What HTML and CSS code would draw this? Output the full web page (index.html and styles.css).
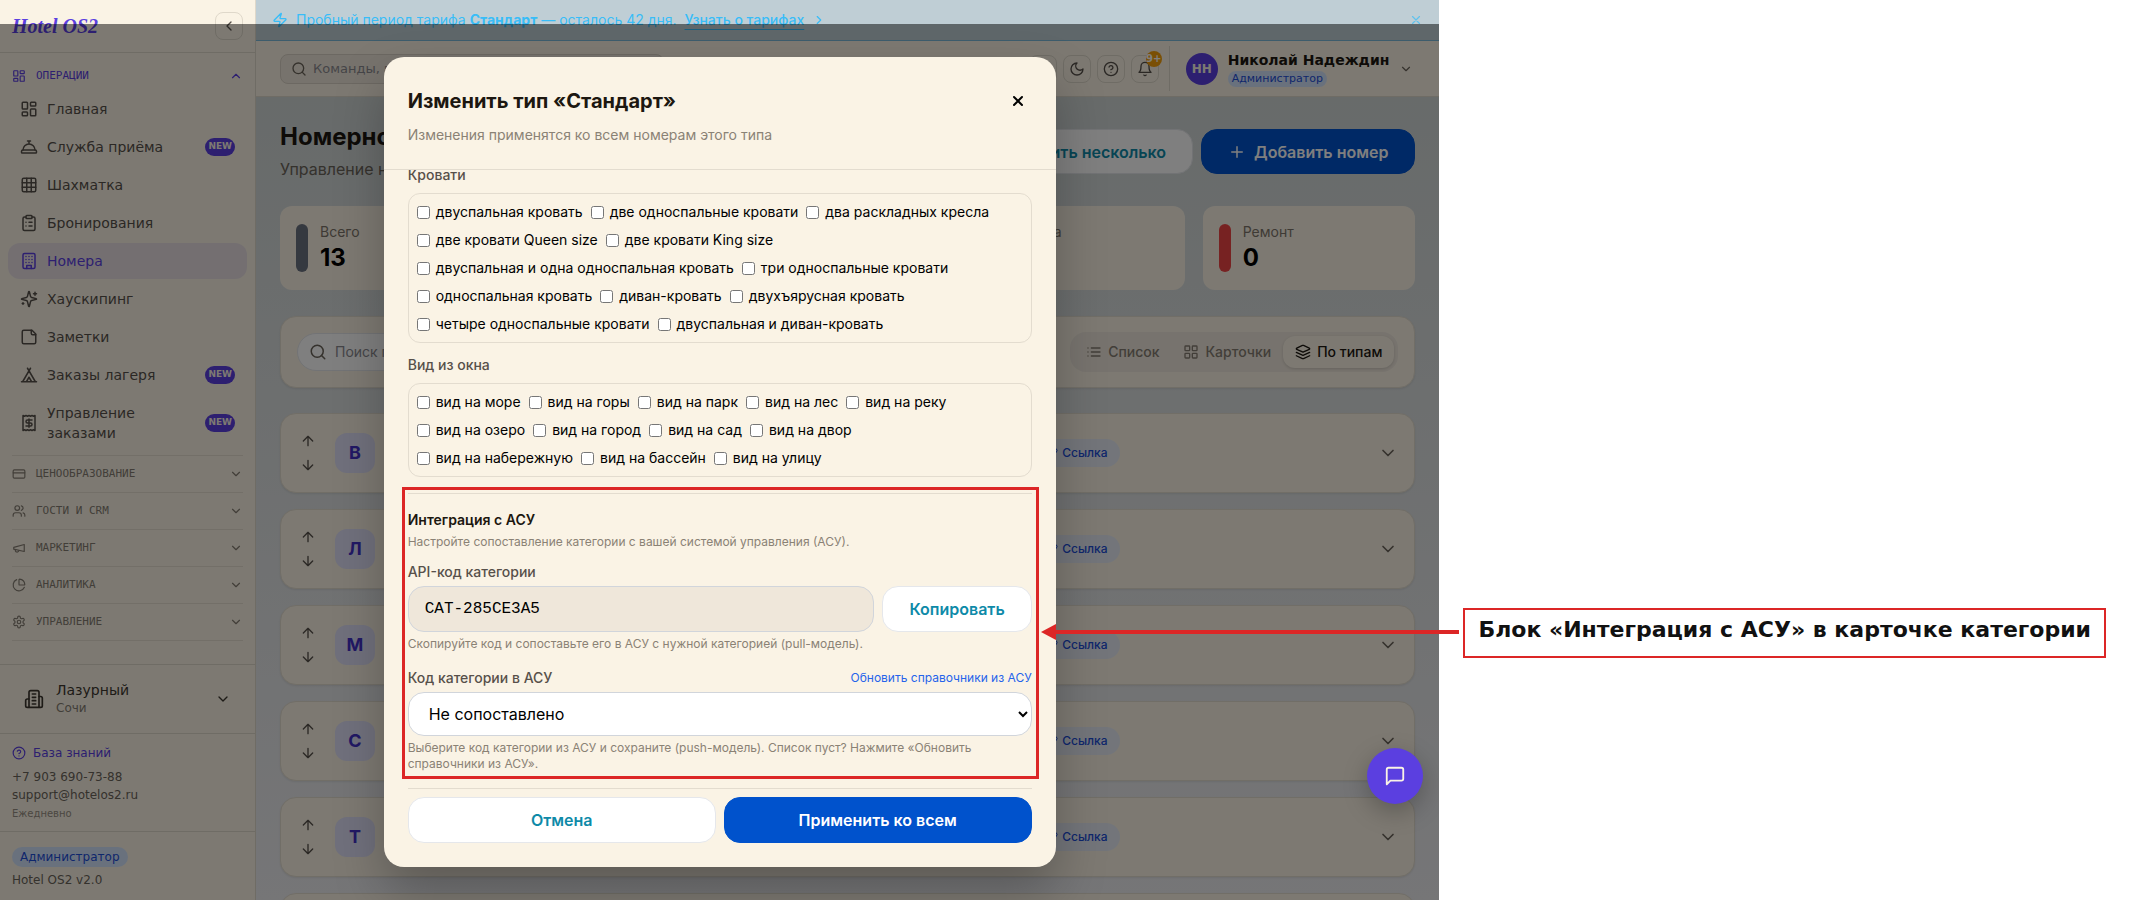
FILE: index.html
```html
<!DOCTYPE html>
<html lang="ru">
<head>
  <meta charset="UTF-8">
  <meta name="viewport" content="width=device-width, initial-scale=1.0">
  <title>Hotel OS2 — Номера</title>
  <link rel="stylesheet" href="styles.css">
</head>
<body>

<!-- набор иконок -->
<svg class="sprite" aria-hidden="true">
  <symbol id="i-dashboard" viewBox="0 0 24 24"><rect x="3" y="3" width="7" height="9" rx="1"/><rect x="14" y="3" width="7" height="5" rx="1"/><rect x="14" y="12" width="7" height="9" rx="1"/><rect x="3" y="16" width="7" height="5" rx="1"/></symbol>
  <symbol id="i-bellhop" viewBox="0 0 24 24"><path d="M3 20a1 1 0 0 1-1-1v-1a2 2 0 0 1 2-2h16a2 2 0 0 1 2 2v1a1 1 0 0 1-1 1Z"/><path d="M20 16a8 8 0 1 0-16 0M12 4v4M10 4h4"/></symbol>
  <symbol id="i-grid" viewBox="0 0 24 24"><rect x="3" y="3" width="18" height="18" rx="2"/><path d="M3 9h18M3 15h18M9 3v18M15 3v18"/></symbol>
  <symbol id="i-clipboard" viewBox="0 0 24 24"><rect x="8" y="2" width="8" height="4" rx="1"/><path d="M16 4h2a2 2 0 0 1 2 2v14a2 2 0 0 1-2 2H6a2 2 0 0 1-2-2V6a2 2 0 0 1 2-2h2M12 11h4M12 16h4M8 11h.01M8 16h.01"/></symbol>
  <symbol id="i-building" viewBox="0 0 24 24"><rect x="4" y="2" width="16" height="20" rx="2"/><path d="M9 22v-4h6v4M8 6h.01M16 6h.01M12 6h.01M12 10h.01M12 14h.01M16 10h.01M16 14h.01M8 10h.01M8 14h.01"/></symbol>
  <symbol id="i-sparkles" viewBox="0 0 24 24"><path d="M9.937 15.5A2 2 0 0 0 8.5 14.063l-6.135-1.582a.5.5 0 0 1 0-.962L8.5 9.936A2 2 0 0 0 9.937 8.5l1.582-6.135a.5.5 0 0 1 .963 0L14.063 8.5A2 2 0 0 0 15.5 9.937l6.135 1.581a.5.5 0 0 1 0 .964L15.5 14.063a2 2 0 0 0-1.437 1.437l-1.582 6.135a.5.5 0 0 1-.963 0z"/><path d="M20 3v4M22 5h-4M4 17v2M5 18H3"/></symbol>
  <symbol id="i-note" viewBox="0 0 24 24"><path d="M16 3H5a2 2 0 0 0-2 2v14a2 2 0 0 0 2 2h14a2 2 0 0 0 2-2V8Z"/><path d="M15 3v4a2 2 0 0 0 2 2h4"/></symbol>
  <symbol id="i-tent" viewBox="0 0 24 24"><path d="M3.5 21 14 3M20.5 21 10 3M15.5 21 12 15l-3.5 6M2 21h20"/></symbol>
  <symbol id="i-receipt" viewBox="0 0 24 24"><path d="M4 2v20l2-1 2 1 2-1 2 1 2-1 2 1 2-1 2 1V2l-2 1-2-1-2 1-2-1-2 1-2-1-2 1Z"/><path d="M16 8h-6a2 2 0 1 0 0 4h4a2 2 0 1 1 0 4H8M12 17.5v-11"/></symbol>
  <symbol id="i-card" viewBox="0 0 24 24"><rect x="2" y="5" width="20" height="14" rx="2"/><path d="M2 10h20"/></symbol>
  <symbol id="i-users" viewBox="0 0 24 24"><path d="M16 21v-2a4 4 0 0 0-4-4H6a4 4 0 0 0-4 4v2M22 21v-2a4 4 0 0 0-3-3.87M16 3.13a4 4 0 0 1 0 7.75"/><circle cx="9" cy="7" r="4"/></symbol>
  <symbol id="i-megaphone" viewBox="0 0 24 24"><path d="m3 11 18-5v12L3 14v-3z"/><path d="M11.6 16.8a3 3 0 1 1-5.8-1.6"/></symbol>
  <symbol id="i-pie" viewBox="0 0 24 24"><path d="M21 12c.552 0 1.005-.449.95-.998a10 10 0 0 0-8.953-8.951c-.55-.055-.998.398-.998.95v8a1 1 0 0 0 1 1z"/><path d="M21.21 15.89A10 10 0 1 1 8 2.83"/></symbol>
  <symbol id="i-settings" viewBox="0 0 24 24"><path d="M12.22 2h-.44a2 2 0 0 0-2 2v.18a2 2 0 0 1-1 1.73l-.43.25a2 2 0 0 1-2 0l-.15-.08a2 2 0 0 0-2.73.73l-.22.38a2 2 0 0 0 .73 2.73l.15.1a2 2 0 0 1 1 1.72v.51a2 2 0 0 1-1 1.74l-.15.09a2 2 0 0 0-.73 2.73l.22.38a2 2 0 0 0 2.73.73l.15-.08a2 2 0 0 1 2 0l.43.25a2 2 0 0 1 1 1.73V20a2 2 0 0 0 2 2h.44a2 2 0 0 0 2-2v-.18a2 2 0 0 1 1-1.73l.43-.25a2 2 0 0 1 2 0l.15.08a2 2 0 0 0 2.73-.73l.22-.39a2 2 0 0 0-.73-2.73l-.15-.08a2 2 0 0 1-1-1.74v-.5a2 2 0 0 1 1-1.74l.15-.09a2 2 0 0 0 .73-2.73l-.22-.38a2 2 0 0 0-2.73-.73l-.15.08a2 2 0 0 1-2 0l-.43-.25a2 2 0 0 1-1-1.73V4a2 2 0 0 0-2-2z"/><circle cx="12" cy="12" r="3"/></symbol>
  <symbol id="i-hotel" viewBox="0 0 24 24"><path d="M6 22V4a2 2 0 0 1 2-2h8a2 2 0 0 1 2 2v18Z"/><path d="M6 12H4a2 2 0 0 0-2 2v6a2 2 0 0 0 2 2h2M18 9h2a2 2 0 0 1 2 2v9a2 2 0 0 1-2 2h-2M10 6h4M10 10h4M10 14h4M10 18h4"/></symbol>
  <symbol id="i-help" viewBox="0 0 24 24"><circle cx="12" cy="12" r="10"/><path d="M9.09 9a3 3 0 0 1 5.83 1c0 2-3 3-3 3M12 17h.01"/></symbol>
  <symbol id="i-moon" viewBox="0 0 24 24"><path d="M12 3a6 6 0 0 0 9 9 9 9 0 1 1-9-9Z"/></symbol>
  <symbol id="i-bell" viewBox="0 0 24 24"><path d="M6 8a6 6 0 0 1 12 0c0 7 3 9 3 9H3s3-2 3-9M10.3 21a1.94 1.94 0 0 0 3.4 0"/></symbol>
  <symbol id="i-zap" viewBox="0 0 24 24"><path d="M4 14a1 1 0 0 1-.78-1.63l9.9-10.2a.5.5 0 0 1 .86.46l-1.92 6.02A1 1 0 0 0 13 10h7a1 1 0 0 1 .78 1.63l-9.9 10.2a.5.5 0 0 1-.86-.46l1.92-6.02A1 1 0 0 0 11 14z"/></symbol>
  <symbol id="i-search" viewBox="0 0 24 24"><circle cx="11" cy="11" r="8"/><path d="m21 21-4.3-4.3"/></symbol>
  <symbol id="i-list" viewBox="0 0 24 24"><path d="M8 6h13M8 12h13M8 18h13M3 6h.01M3 12h.01M3 18h.01"/></symbol>
  <symbol id="i-cards" viewBox="0 0 24 24"><rect x="3" y="3" width="7" height="7" rx="1"/><rect x="14" y="3" width="7" height="7" rx="1"/><rect x="14" y="14" width="7" height="7" rx="1"/><rect x="3" y="14" width="7" height="7" rx="1"/></symbol>
  <symbol id="i-layers" viewBox="0 0 24 24"><path d="m12.83 2.18a2 2 0 0 0-1.66 0L2.6 6.08a1 1 0 0 0 0 1.83l8.58 3.91a2 2 0 0 0 1.66 0l8.58-3.9a1 1 0 0 0 0-1.83Z"/><path d="m22 17.65-9.17 4.16a2 2 0 0 1-1.66 0L2 17.65M22 12.65l-9.17 4.16a2 2 0 0 1-1.66 0L2 12.65"/></symbol>
  <symbol id="i-link" viewBox="0 0 24 24"><path d="M10 13a5 5 0 0 0 7.54.54l3-3a5 5 0 0 0-7.07-7.07l-1.72 1.71"/><path d="M14 11a5 5 0 0 0-7.54-.54l-3 3a5 5 0 0 0 7.07 7.07l1.71-1.71"/></symbol>
  <symbol id="i-chat" viewBox="0 0 24 24"><path d="M21 15a2 2 0 0 1-2 2H7l-4 4V5a2 2 0 0 1 2-2h14a2 2 0 0 1 2 2z"/></symbol>
  <symbol id="i-down" viewBox="0 0 24 24"><path d="m6 9 6 6 6-6"/></symbol>
  <symbol id="i-up" viewBox="0 0 24 24"><path d="m18 15-6-6-6 6"/></symbol>
  <symbol id="i-left" viewBox="0 0 24 24"><path d="m15 18-6-6 6-6"/></symbol>
  <symbol id="i-right" viewBox="0 0 24 24"><path d="m9 18 6-6-6-6"/></symbol>
  <symbol id="i-arrow-up" viewBox="0 0 24 24"><path d="m5 12 7-7 7 7M12 19V5"/></symbol>
  <symbol id="i-arrow-down" viewBox="0 0 24 24"><path d="M12 5v14M19 12l-7 7-7-7"/></symbol>
  <symbol id="i-plus" viewBox="0 0 24 24"><path d="M5 12h14M12 5v14"/></symbol>
  <symbol id="i-x" viewBox="0 0 24 24"><path d="M18 6 6 18M6 6l12 12"/></symbol>
</svg>

<div class="page">
  <div class="app">

    <!-- боковое меню -->
    <aside class="sidebar">
      <div class="sidebar-head">
        <a href="#" class="logo">Hotel OS2</a>
        <button class="square-btn" aria-label="Свернуть меню"><svg class="icon s16"><use href="#i-left"/></svg></button>
      </div>

      <nav class="nav">
        <button class="nav-group open"><svg class="icon s14"><use href="#i-dashboard"/></svg><span>ОПЕРАЦИИ</span><svg class="icon s14"><use href="#i-up"/></svg></button>
        <div class="nav-items">
          <a href="#" class="nav-item"><svg class="icon s18"><use href="#i-dashboard"/></svg><span>Главная</span></a>
          <a href="#" class="nav-item"><svg class="icon s18"><use href="#i-bellhop"/></svg><span>Служба приёма</span><b class="new">NEW</b></a>
          <a href="#" class="nav-item"><svg class="icon s18"><use href="#i-grid"/></svg><span>Шахматка</span></a>
          <a href="#" class="nav-item"><svg class="icon s18"><use href="#i-clipboard"/></svg><span>Бронирования</span></a>
          <a href="#" class="nav-item active"><svg class="icon s18"><use href="#i-building"/></svg><span>Номера</span></a>
          <a href="#" class="nav-item"><svg class="icon s18"><use href="#i-sparkles"/></svg><span>Хаускипинг</span></a>
          <a href="#" class="nav-item"><svg class="icon s18"><use href="#i-note"/></svg><span>Заметки</span></a>
          <a href="#" class="nav-item"><svg class="icon s18"><use href="#i-tent"/></svg><span>Заказы лагеря</span><b class="new">NEW</b></a>
          <a href="#" class="nav-item"><svg class="icon s18"><use href="#i-receipt"/></svg><span>Управление заказами</span><b class="new">NEW</b></a>
        </div>
        <button class="nav-group"><svg class="icon s14"><use href="#i-card"/></svg><span>ЦЕНООБРАЗОВАНИЕ</span><svg class="icon s14"><use href="#i-down"/></svg></button>
        <button class="nav-group"><svg class="icon s14"><use href="#i-users"/></svg><span>ГОСТИ И CRM</span><svg class="icon s14"><use href="#i-down"/></svg></button>
        <button class="nav-group"><svg class="icon s14"><use href="#i-megaphone"/></svg><span>МАРКЕТИНГ</span><svg class="icon s14"><use href="#i-down"/></svg></button>
        <button class="nav-group"><svg class="icon s14"><use href="#i-pie"/></svg><span>АНАЛИТИКА</span><svg class="icon s14"><use href="#i-down"/></svg></button>
        <button class="nav-group last"><svg class="icon s14"><use href="#i-settings"/></svg><span>УПРАВЛЕНИЕ</span><svg class="icon s14"><use href="#i-down"/></svg></button>
      </nav>

      <button class="hotel">
        <svg class="icon s20"><use href="#i-hotel"/></svg>
        <span class="hotel-text"><span class="hotel-name">Лазурный</span><span class="hotel-city">Сочи</span></span>
        <svg class="icon s16"><use href="#i-down"/></svg>
      </button>

      <div class="support">
        <a href="#" class="kb"><svg class="icon s14"><use href="#i-help"/></svg>База знаний</a>
        <a href="#">+7 903 690-73-88</a>
        <a href="#">support@hotelos2.ru</a>
        <small>Ежедневно</small>
      </div>

      <div class="version">
        <span class="role">Администратор</span>
        <span>Hotel OS2 v2.0</span>
      </div>
    </aside>

    <div class="content">
      <div class="banner">
        <svg class="icon s16"><use href="#i-zap"/></svg>
        <p>Пробный период тарифа <b>Стандарт</b> — осталось 42 дня.</p>
        <a href="#">Узнать о тарифах</a>
        <svg class="icon s14"><use href="#i-right"/></svg>
        <button class="banner-close" aria-label="Закрыть"><svg class="icon s14"><use href="#i-x"/></svg></button>
      </div>

      <header class="topbar">
        <label class="command">
          <svg class="icon s16"><use href="#i-search"/></svg>
          <input type="text" placeholder="Команды, поиск" aria-label="Команды, поиск">
        </label>
        <div class="top-actions">
          <button class="square-btn" aria-label="Язык"></button>
          <button class="square-btn" aria-label="Тёмная тема"><svg class="icon s16"><use href="#i-moon"/></svg></button>
          <button class="square-btn" aria-label="Помощь"><svg class="icon s16"><use href="#i-help"/></svg></button>
          <button class="square-btn" aria-label="Уведомления"><svg class="icon s16"><use href="#i-bell"/></svg><span class="count">9+</span></button>
        </div>
        <button class="user">
          <span class="avatar">НН</span>
          <span class="user-text"><b>Николай Надеждин</b><span class="role small">Администратор</span></span>
          <svg class="icon s14"><use href="#i-down"/></svg>
        </button>
      </header>

      <main class="main">
        <div class="page-head">
          <div class="page-title">
            <h1>Номерной фонд</h1>
            <p>Управление номерами</p>
          </div>
          <button class="btn btn-light">Добавить несколько</button>
          <button class="btn btn-primary"><svg class="icon s18"><use href="#i-plus"/></svg>Добавить номер</button>
        </div>

        <div class="stats">
          <div class="stat"><i class="bar gray"></i><div><span>Всего</span><b>13</b></div></div>
          <div class="stat"></div>
          <div class="stat"></div>
          <div class="stat"><i class="bar"></i><div class="stat-top"><span>Уборка</span></div></div>
          <div class="stat"><i class="bar red"></i><div><span>Ремонт</span><b>0</b></div></div>
        </div>

        <div class="toolbar">
          <label class="find">
            <svg class="icon s18"><use href="#i-search"/></svg>
            <input type="text" placeholder="Поиск по номеру" aria-label="Поиск по номеру">
          </label>
          <div class="tabs">
            <button class="tab"><svg class="icon s16"><use href="#i-list"/></svg>Список</button>
            <button class="tab"><svg class="icon s16"><use href="#i-cards"/></svg>Карточки</button>
            <button class="tab active"><svg class="icon s16"><use href="#i-layers"/></svg>По типам</button>
          </div>
        </div>

        <div class="types">
          <div class="type">
            <div class="order"><button aria-label="Выше"><svg class="icon s16"><use href="#i-arrow-up"/></svg></button><button aria-label="Ниже"><svg class="icon s16"><use href="#i-arrow-down"/></svg></button></div>
            <span class="letter">В</span>
            <a href="#" class="share"><svg class="icon s12"><use href="#i-link"/></svg>Ссылка</a>
            <svg class="icon s20 toggle"><use href="#i-down"/></svg>
          </div>
          <div class="type">
            <div class="order"><button aria-label="Выше"><svg class="icon s16"><use href="#i-arrow-up"/></svg></button><button aria-label="Ниже"><svg class="icon s16"><use href="#i-arrow-down"/></svg></button></div>
            <span class="letter">Л</span>
            <a href="#" class="share"><svg class="icon s12"><use href="#i-link"/></svg>Ссылка</a>
            <svg class="icon s20 toggle"><use href="#i-down"/></svg>
          </div>
          <div class="type">
            <div class="order"><button aria-label="Выше"><svg class="icon s16"><use href="#i-arrow-up"/></svg></button><button aria-label="Ниже"><svg class="icon s16"><use href="#i-arrow-down"/></svg></button></div>
            <span class="letter">М</span>
            <a href="#" class="share"><svg class="icon s12"><use href="#i-link"/></svg>Ссылка</a>
            <svg class="icon s20 toggle"><use href="#i-down"/></svg>
          </div>
          <div class="type">
            <div class="order"><button aria-label="Выше"><svg class="icon s16"><use href="#i-arrow-up"/></svg></button><button aria-label="Ниже"><svg class="icon s16"><use href="#i-arrow-down"/></svg></button></div>
            <span class="letter">С</span>
            <a href="#" class="share"><svg class="icon s12"><use href="#i-link"/></svg>Ссылка</a>
            <svg class="icon s20 toggle"><use href="#i-down"/></svg>
          </div>
          <div class="type">
            <div class="order"><button aria-label="Выше"><svg class="icon s16"><use href="#i-arrow-up"/></svg></button><button aria-label="Ниже"><svg class="icon s16"><use href="#i-arrow-down"/></svg></button></div>
            <span class="letter">Т</span>
            <a href="#" class="share"><svg class="icon s12"><use href="#i-link"/></svg>Ссылка</a>
            <svg class="icon s20 toggle"><use href="#i-down"/></svg>
          </div>
          <div class="type"></div>
        </div>
      </main>
    </div>

    <!-- окно изменения типа -->
    <div class="overlay">
      <div class="modal" role="dialog" aria-labelledby="modalTitle">
        <div class="modal-head">
          <div class="modal-title">
            <h2 id="modalTitle">Изменить тип «Стандарт»</h2>
            <button class="modal-close" aria-label="Закрыть"><svg class="icon s16"><use href="#i-x"/></svg></button>
          </div>
          <p>Изменения применятся ко всем номерам этого типа</p>
        </div>

        <div class="modal-body">
          <p class="label">Кровати</p>
          <div class="checks">
            <label><input type="checkbox">двуспальная кровать</label>
            <label><input type="checkbox">две односпальные кровати</label>
            <label><input type="checkbox">два раскладных кресла</label>
            <label><input type="checkbox">две кровати Queen size</label>
            <label><input type="checkbox">две кровати King size</label>
            <label><input type="checkbox">двуспальная и одна односпальная кровать</label>
            <label><input type="checkbox">три односпальные кровати</label>
            <label><input type="checkbox">односпальная кровать</label>
            <label><input type="checkbox">диван-кровать</label>
            <label><input type="checkbox">двухъярусная кровать</label>
            <label><input type="checkbox">четыре односпальные кровати</label>
            <label><input type="checkbox">двуспальная и диван-кровать</label>
          </div>

          <p class="label">Вид из окна</p>
          <div class="checks">
            <label><input type="checkbox">вид на море</label>
            <label><input type="checkbox">вид на горы</label>
            <label><input type="checkbox">вид на парк</label>
            <label><input type="checkbox">вид на лес</label>
            <label><input type="checkbox">вид на реку</label>
            <label><input type="checkbox">вид на озеро</label>
            <label><input type="checkbox">вид на город</label>
            <label><input type="checkbox">вид на сад</label>
            <label><input type="checkbox">вид на двор</label>
            <label><input type="checkbox">вид на набережную</label>
            <label><input type="checkbox">вид на бассейн</label>
            <label><input type="checkbox">вид на улицу</label>
          </div>

          <section class="integration">
            <h3>Интеграция с АСУ</h3>
            <p class="hint">Настройте сопоставление категории с вашей системой управления (АСУ).</p>
            <div class="field">
              <label class="label" for="apiCode">API-код категории</label>
              <div class="copy">
                <input type="text" id="apiCode" class="code" value="CAT-285CE3A5" readonly>
                <button class="btn btn-light">Копировать</button>
              </div>
              <p class="hint">Скопируйте код и сопоставьте его в АСУ с нужной категорией (pull-модель).</p>
            </div>
            <div class="field second">
              <div class="label-row">
                <label class="label" for="asuCode">Код категории в АСУ</label>
                <a href="#">Обновить справочники из АСУ</a>
              </div>
              <select id="asuCode" class="select"><option>Не сопоставлено</option></select>
              <p class="hint">Выберите код категории из АСУ и сохраните (push-модель). Список пуст? Нажмите «Обновить справочники из АСУ».</p>
            </div>
          </section>
        </div>

        <div class="modal-foot">
          <button class="btn btn-light">Отмена</button>
          <button class="btn btn-primary">Применить ко всем</button>
        </div>
      </div>
    </div>

    <button class="chat" aria-label="Чат"><svg class="icon s22"><use href="#i-chat"/></svg></button>
  </div>

  <!-- подпись со стрелкой -->
  <aside class="notes">
    <div class="callout">
      <svg class="arrow" viewBox="0 0 418 18"><path d="M12 9H418" stroke="#dc2626" stroke-width="4"/><path d="M0 9 15 1V17Z" fill="#dc2626"/></svg>
      Блок «Интеграция с АСУ» в карточке категории
    </div>
  </aside>
</div>

</body>
</html>
```
FILE: styles.css
```css
* {
  box-sizing: border-box;
}

body {
  margin: 0;
  background-color: #fff;
  font-family: "DejaVu Sans", sans-serif;
  font-size: 14px;
  line-height: 20px;
  color: #1c1710;
}

h1, h2, h3, p {
  margin: 0;
}

a {
  color: inherit;
  text-decoration: none;
}

button, input, select {
  font: inherit;
  color: inherit;
}

button {
  padding: 0;
  border: none;
  background: none;
  cursor: pointer;
}

.sprite {
  position: absolute;
  width: 0;
  height: 0;
}

.icon {
  flex: none;
  fill: none;
  stroke: currentColor;
  stroke-width: 2;
  stroke-linecap: round;
  stroke-linejoin: round;
}

.s12 { width: 12px; height: 12px; }
.s14 { width: 14px; height: 14px; }
.s16 { width: 16px; height: 16px; }
.s18 { width: 18px; height: 18px; }
.s20 { width: 20px; height: 20px; }
.s22 { width: 22px; height: 22px; }

.page {
  display: flex;
  height: 100vh;
  overflow: hidden;
}

.app {
  position: relative;
  flex: 1;
  display: flex;
  min-width: 0;
  overflow: hidden;
}

/* боковое меню */
.sidebar {
  flex: none;
  width: 256px;
  display: flex;
  flex-direction: column;
  background-color: #faf3e5;
  border-right: 1px solid #dfd8ca;
  color: #57504a;
}

.sidebar-head {
  display: flex;
  align-items: center;
  justify-content: space-between;
  height: 53px;
  padding: 0 12px;
  border-bottom: 1px solid #dfd8ca;
}

.logo {
  font-family: "Liberation Serif", serif;
  font-size: 20px;
  font-weight: bold;
  font-style: italic;
  color: #5b3fe0;
}

.square-btn {
  position: relative;
  display: flex;
  align-items: center;
  justify-content: center;
  width: 28px;
  height: 28px;
  border: 1px solid #dfd8ca;
  border-radius: 8px;
  color: #57504a;
}

.nav {
  flex: 1;
  padding: 8px 12px;
}

.nav-group {
  display: flex;
  align-items: center;
  gap: 10px;
  width: 100%;
  height: 37px;
  border-top: 1px solid #e6dfd1;
  font-family: "DejaVu Sans Mono", monospace;
  font-size: 11px;
  text-align: left;
  color: #857d72;
}

.nav-group span {
  flex: 1;
}

.nav-group.open {
  height: 30px;
  border: none;
  color: #5b3fe0;
}

.nav-group.last {
  height: 38px;
  border-bottom: 1px solid #e6dfd1;
}

.nav-items {
  display: flex;
  flex-direction: column;
  gap: 2px;
  margin: 0 -4px 4px;
}

.nav-item {
  display: flex;
  align-items: center;
  gap: 9px;
  padding: 8px 12px;
  border-radius: 12px;
}

.nav-item span {
  flex: 1;
}

.nav-item.active {
  background-color: #e8dfe3;
  color: #5b3fe0;
}

.new {
  height: 18px;
  padding: 0 3px;
  border-radius: 9px;
  background-color: #5b3fe0;
  color: #faf3e5;
  font-size: 9px;
  line-height: 16px;
}

.hotel {
  display: flex;
  align-items: center;
  gap: 12px;
  height: 69px;
  padding: 0 24px;
  border-top: 1px solid #dfd8ca;
  text-align: left;
  color: #3d372f;
}

.hotel-text {
  flex: 1;
}

.hotel-name, .hotel-city {
  display: block;
  line-height: 18px;
}

.hotel-city {
  font-size: 12px;
  color: #857d72;
}

.support {
  display: flex;
  flex-direction: column;
  height: 98px;
  padding: 10px 12px;
  border-top: 1px solid #dfd8ca;
  font-size: 12px;
  line-height: 18px;
  color: #6b645a;
}

.kb {
  display: flex;
  align-items: center;
  gap: 7px;
  margin-bottom: 6px;
  color: #5b3fe0;
}

.support small {
  font-size: 10px;
  line-height: 20px;
  color: #968e82;
}

.version {
  display: flex;
  flex-direction: column;
  align-items: flex-start;
  gap: 4px;
  height: 69px;
  padding-top: 15px;
  padding-left: 12px;
  border-top: 1px solid #dfd8ca;
  font-size: 12px;
  line-height: 18px;
  color: #6b645a;
}

.role {
  padding: 0 8px;
  border-radius: 10px;
  background-color: #d3e3fb;
  font-size: 12px;
  line-height: 20px;
  color: #1d4ed8;
}

.role.small {
  padding: 0 4px;
  font-size: 11px;
  line-height: 16px;
}

/* правая часть */
.content {
  flex: 1;
  display: flex;
  flex-direction: column;
  min-width: 0;
}

.banner {
  flex: none;
  display: flex;
  align-items: center;
  gap: 8px;
  height: 41px;
  padding: 0 16px;
  background-color: #bfced5;
  border-bottom: 1px solid #7ab8d8;
  font-family: Inter, sans-serif;
  color: #38bdf8;
}

.banner a {
  font-weight: 500;
  text-decoration: underline;
  text-underline-offset: 4px;
}

.banner-close {
  display: flex;
  margin-left: auto;
  opacity: 0.7;
}

.topbar {
  flex: none;
  display: flex;
  align-items: center;
  height: 56px;
  padding: 0 24px;
  background-color: #faf3e5;
  border-bottom: 1px solid #dfd8ca;
}

.command {
  display: flex;
  align-items: center;
  gap: 6px;
  width: 384px;
  height: 30px;
  padding: 0 10px;
  border: 1px solid #d8d0c4;
  border-radius: 8px;
  background-color: #efe7da;
  font-size: 13px;
  color: #6b645a;
}

.command input, .find input {
  flex: 1;
  min-width: 0;
  padding: 0;
  border: none;
  outline: none;
  background: none;
}

.command input::placeholder, .find input::placeholder {
  color: #8b8a90;
}

.top-actions {
  display: flex;
  gap: 6px;
  margin-left: auto;
  padding-right: 10px;
}

.count {
  position: absolute;
  top: -5px;
  right: -4px;
  width: 16px;
  height: 16px;
  border-radius: 8px;
  background-color: #f59e0b;
  font-size: 10px;
  font-weight: bold;
  line-height: 16px;
  text-align: center;
  color: #fff;
}

.user {
  display: flex;
  align-items: center;
  gap: 10px;
  height: 45px;
  padding-left: 16px;
  border-left: 1px solid #dfd8ca;
  text-align: left;
}

.user .icon {
  margin-right: 2px;
  color: #6b645a;
}

.avatar {
  width: 32px;
  height: 32px;
  border-radius: 16px;
  background-color: #5b3fe0;
  font-size: 12px;
  font-weight: bold;
  line-height: 32px;
  text-align: center;
  color: #faf3e5;
}

.user-text {
  display: flex;
  flex-direction: column;
  align-items: flex-start;
  gap: 2px;
}

.user-text b {
  line-height: 18px;
}

.main {
  flex: 1;
  min-height: 0;
  padding: 32px 24px 0;
  overflow: hidden;
  background-image: linear-gradient(#d0d6d5, #ececef);
  font-family: Inter, sans-serif;
}

.page-head {
  display: flex;
  gap: 8px;
  height: 77px;
}

.page-title {
  flex: 1;
  margin-top: -8px;
}

.page-title h1 {
  font-size: 24px;
  line-height: 32px;
}

.page-title p {
  margin-top: 4px;
  font-size: 16px;
  line-height: 24px;
  color: #6b645a;
}

.btn {
  display: flex;
  align-items: center;
  justify-content: center;
  gap: 8px;
  height: 46px;
  padding: 0 26px;
  border: 1px solid #e5e7eb;
  border-radius: 16px;
  font-family: Inter, sans-serif;
  font-size: 16px;
  font-weight: 600;
}

.btn-light {
  background-color: #fff;
  color: #0e8aa8;
}

.btn-primary {
  background-color: #0052cc;
  border-color: #0052cc;
  color: #fff;
}

.page-head .btn {
  height: 45px;
}

.stats {
  display: grid;
  grid-template-columns: repeat(5, 1fr);
  gap: 18px;
}

.stat {
  display: flex;
  align-items: center;
  gap: 12px;
  height: 84px;
  padding: 16px;
  border-radius: 12px;
  background-color: #faf3e5;
}

.stat-top {
  align-self: flex-start;
}

.stat span, .stat b {
  display: block;
}

.stat span {
  color: #7d756a;
}

.stat b {
  font-size: 24px;
  line-height: 32px;
  color: #000;
}

.bar {
  width: 12px;
  height: 48px;
  border-radius: 6px;
}

.bar.gray { background-color: #6b7280; }
.bar.red { background-color: #ef4444; }

.toolbar, .type {
  border: 1px solid #e3dccf;
  border-radius: 16px;
  background-color: #faf3e5;
  box-shadow: 0 1px 2px rgba(0, 0, 0, 0.08);
}

.toolbar {
  display: flex;
  align-items: center;
  justify-content: space-between;
  margin-top: 26px;
  padding: 15px 16px;
}

.find {
  display: flex;
  align-items: center;
  gap: 8px;
  width: 400px;
  height: 38px;
  padding: 0 11px;
  border: 1px solid #e5e7eb;
  border-radius: 19px;
  background-color: #fff;
  color: #6b645a;
}

.tabs {
  display: flex;
  padding: 4px;
  border-radius: 16px;
  background-color: #efe7dc;
}

.tab {
  display: flex;
  align-items: center;
  gap: 6px;
  height: 32px;
  padding: 0 12px;
  border-radius: 12px;
  font-weight: 500;
  color: #857d72;
}

.tab.active {
  background-color: #faf3e5;
  box-shadow: 0 1px 3px rgba(0, 0, 0, 0.15);
  color: #1c1710;
}

.types {
  display: flex;
  flex-direction: column;
  gap: 16px;
  margin-top: 25px;
}

.type {
  display: grid;
  grid-template-columns: 22px 40px 729fr 227fr 20px;
  align-items: center;
  gap: 16px;
  height: 80px;
  padding: 0 16px;
}

.order {
  display: flex;
  flex-direction: column;
}

.order button {
  display: flex;
  align-items: center;
  justify-content: center;
  height: 24px;
  color: #57504a;
}

.letter {
  border-radius: 12px;
  background-color: #e0e0f8;
  font-size: 18px;
  font-weight: bold;
  line-height: 40px;
  text-align: center;
  color: #4330c8;
}

.share {
  justify-self: end;
  display: flex;
  align-items: center;
  gap: 4px;
  height: 28px;
  padding: 0 12px;
  border-radius: 14px;
  background-color: #e6ebf5;
  font-size: 12px;
  font-weight: 500;
  color: #1d4ed8;
}

.toggle {
  grid-column: 5;
  color: #6b645a;
}

/* окно */
.overlay {
  position: absolute;
  top: 24px;
  right: 0;
  bottom: 0;
  left: 0;
  display: flex;
  align-items: center;
  justify-content: center;
  background-color: rgba(0, 0, 0, 0.5);
  font-family: Inter, sans-serif;
}

.modal {
  display: flex;
  flex-direction: column;
  width: 672px;
  max-height: 90vh;
  border-radius: 20px;
  background-color: #faf3e5;
  box-shadow: 0 25px 50px rgba(0, 0, 0, 0.25);
  overflow: hidden;
}

.modal-head {
  flex: none;
  padding: 24px;
  border-bottom: 1px solid #e3dccf;
}

.modal-title {
  display: flex;
  align-items: center;
  justify-content: space-between;
  height: 40px;
}

.modal-title h2 {
  font-size: 20px;
  line-height: 28px;
}

.modal-head p {
  margin-top: 4px;
  color: #8a8275;
}

.modal-close {
  display: flex;
  padding: 6px;
  color: #000;
}

.modal-close .icon {
  stroke-width: 3;
}

.modal-body {
  flex: 1;
  min-height: 0;
  display: flex;
  flex-direction: column;
  justify-content: flex-end;
  padding: 0 24px 16px;
  overflow: hidden;
}

.label {
  font-weight: 500;
  color: #57504a;
}

.checks {
  display: flex;
  flex-wrap: wrap;
  gap: 8px;
  margin: 8px 0 12px;
  padding: 8px 24px 8px 8px;
  border: 1px solid #e3dccf;
  border-radius: 12px;
  color: #000;
}

.checks label {
  display: flex;
  align-items: center;
  gap: 6px;
}

.checks input {
  margin: 0;
}

.integration {
  position: relative;
  margin-top: 4px;
  padding-top: 16px;
  border-top: 1px solid #e3dccf;
}

/* красная рамка вокруг блока */
.integration::after {
  content: "";
  position: absolute;
  top: -7px;
  right: -7px;
  bottom: -7px;
  left: -6px;
  border: 3px solid #dc2626;
  pointer-events: none;
}

.integration h3 {
  font-size: 14px;
  font-weight: 600;
}

.hint {
  margin-top: 4px;
  font-size: 12px;
  line-height: 16px;
  color: #8a8275;
}

.field {
  display: flex;
  flex-direction: column;
  margin-top: 12px;
}

.field.second {
  margin-top: 16px;
}

.copy {
  display: flex;
  gap: 8px;
  margin-top: 4px;
}

.code {
  flex: 1;
  min-width: 0;
  height: 46px;
  padding: 0 16px;
  border: 1px solid #d1d5db;
  border-radius: 16px;
  background-color: #efe7da;
  font-family: "Liberation Mono", monospace;
  font-size: 16px;
  color: #000;
}

.label-row {
  display: flex;
  align-items: center;
  justify-content: space-between;
}

.label-row a {
  font-size: 12px;
  color: #2563eb;
}

.select {
  height: 44px;
  margin-top: 4px;
  padding: 0 16px;
  border: 1px solid #d1d5db;
  border-radius: 16px;
  background-color: #fff;
  font-size: 16px;
  color: #000;
}

.modal-foot {
  flex: none;
  display: flex;
  gap: 8px;
  margin: 0 24px 24px;
  padding-top: 8px;
  border-top: 1px solid #e3dccf;
}

.modal-foot .btn {
  flex: 1;
}

.chat {
  position: absolute;
  right: 16px;
  bottom: 96px;
  display: flex;
  align-items: center;
  justify-content: center;
  width: 56px;
  height: 56px;
  border-radius: 50%;
  background-color: #5b3fe0;
  box-shadow: 0 8px 24px rgba(0, 0, 0, 0.25);
  color: #faf3e5;
}

/* подпись справа */
.notes {
  flex: none;
  padding: 608px 23px 0 24px;
}

.callout {
  position: relative;
  padding: 8px 13px 14px;
  border: 2px solid #dc2626;
  font-size: 22px;
  font-weight: bold;
  line-height: 24px;
  white-space: nowrap;
  color: #111;
}

.arrow {
  position: absolute;
  top: 13px;
  right: 100%;
  width: 418px;
  height: 18px;
  margin-right: 6px;
}
```
